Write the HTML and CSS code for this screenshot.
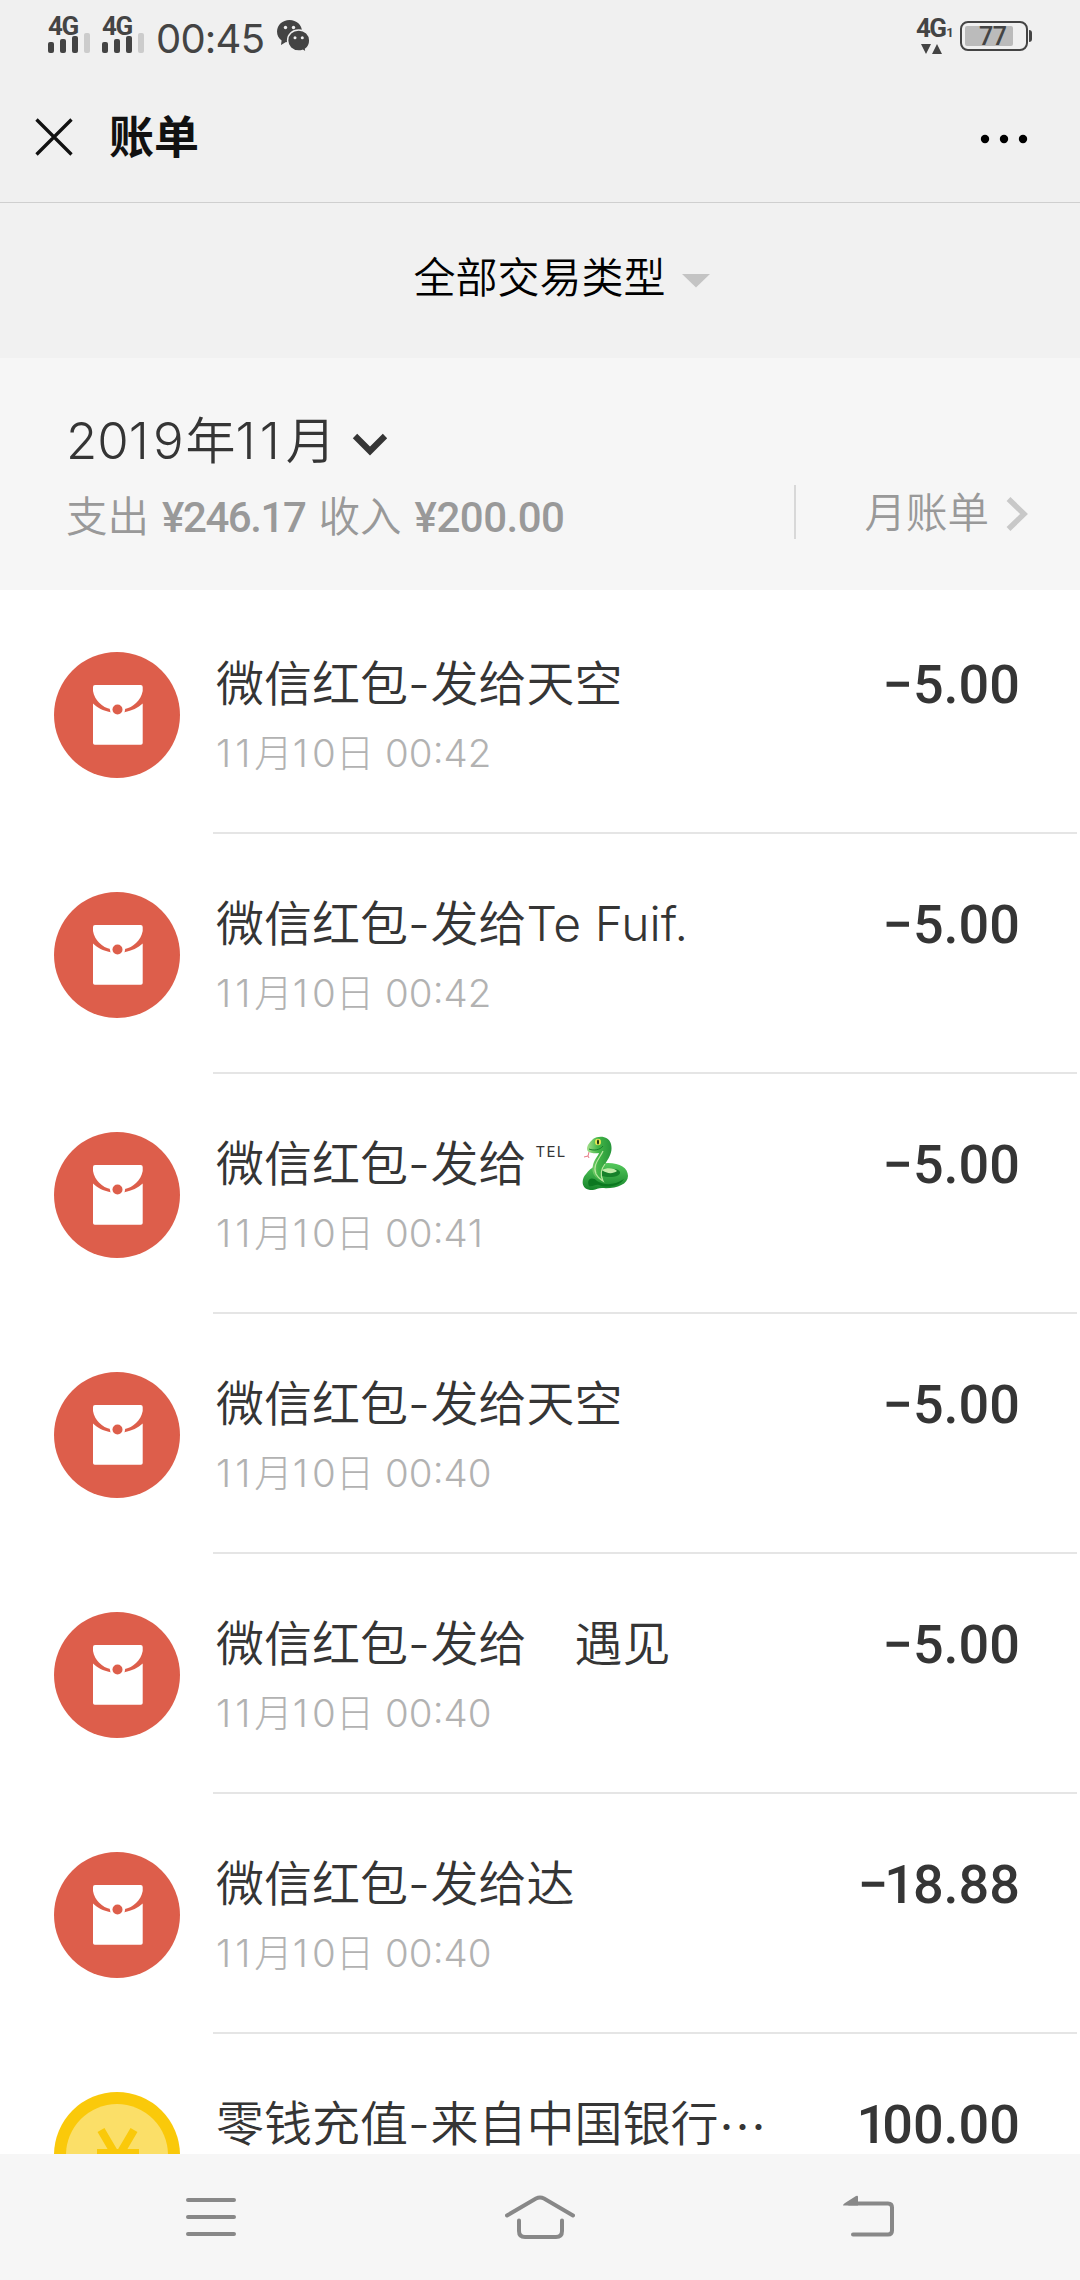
FILE: index.html
```html
<!DOCTYPE html>
<html lang="zh-CN">
<head>
<meta charset="utf-8">
<title>账单</title>
<link rel="stylesheet" href="styles.css">
</head>
<body>
<svg class="defs" width="0" height="0" aria-hidden="true">
  <symbol id="packet" viewBox="0 0 126 126">
    <circle cx="63" cy="63" r="63" fill="#dd5e4b"/>
    <path fill="#fff" d="M39 51.500C43.500 56 49 58.500 56.500 60.200H70.500C78 58.500 84 56 88.700 51.500V91a1.800 1.800 0 0 1-1.800 1.800H40.800A1.800 1.800 0 0 1 39 91Z"/>
    <path fill="#fff" d="M39 35A2 2 0 0 1 41 33H86.700A2 2 0 0 1 88.700 35V39C87 48 79.500 55.500 70 57.200H57C48 55.500 40.500 48 39 39Z"/>
    <circle cx="63.500" cy="57.500" r="7.600" fill="#fff"/>
    <circle cx="63.500" cy="57.500" r="5" fill="#dd5e4b"/>
  </symbol>
  <symbol id="signal" viewBox="0 0 42 20">
    <rect x="0" y="9" width="6" height="11" rx="2" fill="#444"/>
    <rect x="12" y="6" width="6" height="14" rx="2" fill="#444"/>
    <rect x="24" y="3" width="6" height="17" rx="2" fill="#444"/>
    <rect x="36" y="0" width="6" height="20" rx="2" fill="#ccc"/>
  </symbol>
</svg>

<header class="top">
  <div class="status">
    <div class="sim"><span>4G</span><svg width="42" height="20"><use href="#signal"/></svg></div>
    <div class="sim"><span>4G</span><svg width="42" height="20"><use href="#signal"/></svg></div>
    <div class="clock">00:45</div>
    <svg class="wechat" width="33" height="33" viewBox="0 0 33 33">
      <path fill="#444" d="M12.500 0C5.500 0 0 5 0 11.500c0 3.800 1.800 6.900 4.600 9L4 25l5-3c4 1 7 .5 10-1 4-2.200 6-5.500 6-9.500C25 5 19.500 0 12.500 0Z"/>
      <path fill="#444" stroke="#f0f0f0" stroke-width="1.500" d="M21.700 10C15.300 10 10.600 14.500 10.600 20.500S15.300 31 21.700 31c1.500 0 2.800-.2 4-.6l3.500 2-.6-3.300c2.600-1.900 4.200-5 4.200-8.600C32.800 14.500 28 10 21.700 10Z"/>
      <circle cx="8.500" cy="7.500" r="1.700" fill="#f0f0f0"/><circle cx="16.500" cy="7.500" r="1.700" fill="#f0f0f0"/>
      <circle cx="18" cy="17.800" r="1.500" fill="#f0f0f0"/><circle cx="25.300" cy="17.800" r="1.500" fill="#f0f0f0"/>
    </svg>
    <div class="net">
      <div class="net-label">4G<small>1</small></div>
      <svg width="22" height="10" viewBox="0 0 22 10"><path fill="#444" d="M0 0H10L5 10ZM11 10H21L16 0Z"/></svg>
    </div>
    <div class="battery"><span>77</span></div>
  </div>
  <div class="bar">
    <svg class="close" width="38" height="38" viewBox="0 0 38 38"><path d="M1.500 1.500 36.500 36.500M36.500 1.500 1.500 36.500" stroke="#111" stroke-width="3.300" fill="none"/></svg>
    <h1>账单</h1>
    <svg class="more" width="48" height="10" viewBox="0 0 48 10"><circle cx="5" cy="5" r="4.200"/><circle cx="24" cy="5" r="4.200"/><circle cx="43" cy="5" r="4.200"/></svg>
  </div>
</header>

<div class="filter"><span>全部交易类型</span><i class="caret"></i></div>

<section class="month">
  <div class="month-main">
    <div class="month-name"><span>20<i>1</i>9<b>年</b><i>11</i><b>月</b></span>
      <svg width="36" height="24" viewBox="0 0 36 24"><path d="M3 3 18 18 33 3" fill="none" stroke="#353535" stroke-width="6.200"/></svg>
    </div>
    <div class="summary">支出<span class="out">¥246.17</span>收入<span class="in">¥200.00</span></div>
  </div>
  <div class="month-link"><span>月账单</span>
    <svg width="22" height="34" viewBox="0 0 22 34"><path d="M2.500 2 18 17 2.500 32" fill="none" stroke="#c8c8c8" stroke-width="5.500"/></svg>
  </div>
</section>

<main class="list">
  <article class="row"><svg class="icon"><use href="#packet"/></svg><div class="body"><div class="text"><h2>微信红包<i>-</i>发给天空</h2><time><i>11</i>月<i>1</i>0日 00:42</time></div><div class="amount">−5.00</div></div></article>
  <article class="row"><svg class="icon"><use href="#packet"/></svg><div class="body"><div class="text"><h2>微信红包<i>-</i>发给Te Fuif.</h2><time><i>11</i>月<i>1</i>0日 00:42</time></div><div class="amount">−5.00</div></div></article>
  <article class="row"><svg class="icon"><use href="#packet"/></svg><div class="body"><div class="text"><h2>微信红包<i>-</i>发给<span class="tel">TEL</span><svg class="snake" width="48" height="54" viewBox="0 0 48 54">
    <defs>
      <linearGradient id="scale" x1="0" y1="0" x2="0" y2="1"><stop offset="0" stop-color="#55c95c"/><stop offset="1" stop-color="#16852b"/></linearGradient>
      <linearGradient id="neck" x1="0" y1="0" x2="1" y2="0"><stop offset="0" stop-color="#a5e08c"/><stop offset=".45" stop-color="#43b648"/><stop offset="1" stop-color="#27953a"/></linearGradient>
    </defs>
    <path d="M8 16 7 20 3 21M7 20l1 2" fill="none" stroke="#e77a86" stroke-width="1"/>
    <path d="M5 38C0 43 0 53 9 54c6 .5 7-2 12-2 13 1 26-3 26-12 0-8-8-13-20-13-9 0-17 4-22 11Z" fill="url(#scale)"/>
    <path d="M18 39c0-8 22-8 21-2-1 5-14 5-21 2Z" fill="#16812a"/>
    <path d="M21 34c5-3 13-2 15 1-4 3-10 3-15-1Z" fill="#c2ebaa"/>
    <path d="M8 50C5 43 11 40 16 45c6 4 17 5 27-2-5 8-18 9-25 6-4-1-6 2-10 1Z" fill="#0b7820"/>
    <path d="M12 3C18-1 28 0 30 8c2 8-2 14-6 20-4 5-5 11-2 17-8-2-12-8-10-16 1-5 5-9 6-12-5 1-12 0-12-4 0-4 3-7 6-10Z" fill="url(#neck)"/>
    <path d="M22 15C19 22 11 29 15 38c2 4 4 5 7 7-3-6-2-12 2-17" fill="none" stroke="#b9e6a0" stroke-width="1.200"/>
    <ellipse cx="17" cy="6" rx="3" ry="3.300" fill="#e6e651"/><ellipse cx="17" cy="6" rx="1" ry="2.600" fill="#142b12"/>
    <path d="M8 13c5 2 11 1 14-3" fill="none" stroke="#177f2b" stroke-width="1"/>
  </svg></h2><time><i>11</i>月<i>1</i>0日 00:4<i>1</i></time></div><div class="amount">−5.00</div></div></article>
  <article class="row"><svg class="icon"><use href="#packet"/></svg><div class="body"><div class="text"><h2>微信红包<i>-</i>发给天空</h2><time><i>11</i>月<i>1</i>0日 00:40</time></div><div class="amount">−5.00</div></div></article>
  <article class="row"><svg class="icon"><use href="#packet"/></svg><div class="body"><div class="text"><h2>微信红包<i>-</i>发给　遇见</h2><time><i>11</i>月<i>1</i>0日 00:40</time></div><div class="amount">−5.00</div></div></article>
  <article class="row"><svg class="icon"><use href="#packet"/></svg><div class="body"><div class="text"><h2>微信红包<i>-</i>发给达</h2><time><i>11</i>月<i>1</i>0日 00:40</time></div><div class="amount">−<i>1</i>8.88</div></div></article>
  <article class="row last"><svg class="icon" viewBox="0 0 126 126"><circle cx="63" cy="63" r="63" fill="#fac90a"/><circle cx="63" cy="63" r="51" fill="#fbdf68"/><path d="M47 38 63.500 66 80 38M43 61H85M43 75H85M63.500 62V92" fill="none" stroke="#fac90a" stroke-width="8"/></svg><div class="body"><div class="text"><h2>零钱充值<i>-</i>来自中国银行<b>…</b></h2></div><div class="amount"><i>1</i>00.00</div></div></article>
</main>

<nav class="nav">
  <svg width="50" height="44" viewBox="0 0 50 44"><path d="M2 5H48M2 22H48M2 39H48"/></svg>
  <svg width="70" height="46" viewBox="0 0 70 46"><path d="M2 20.500 31 3.500Q35 1.500 39 3.500L68 20.500M14 25.500V36Q14 42 20 42H51Q57 42 57 36V25.500"/></svg>
  <svg width="52" height="44" viewBox="0 0 52 44"><path d="M6 8.500H45Q49 8.500 49 12.500V35.500Q49 39.500 45 39.500H10"/><path class="head" d="M0 10.500Q0 9 2 8L13 1Q15 0 15 2V10.500Z"/></svg>
</nav>
</body>
</html>
```
FILE: styles.css
```css
* { box-sizing: border-box; margin: 0; padding: 0; }
body {
  width: 1080px; height: 2280px; overflow: hidden;
  display: flex; flex-direction: column;
  background: #fff; color: #353535;
  font-family: Inter, "Noto Sans CJK SC", sans-serif;
  font-weight: 350;
}
svg { display: block; flex: none; }
i { font-style: normal; }
.defs { position: absolute; }

.top { height: 203px; background: #f0f0f0; border-bottom: 1px solid #cfcfcf; flex: none; }
.status { height: 72px; display: flex; align-items: flex-start; padding: 0 48px; color: #444; }
.sim { width: 54px; padding-top: 16px; display: flex; flex-direction: column; }
.sim span { font: 700 26px/20px Roboto, sans-serif; height: 17px; letter-spacing: -1.500px; }
.clock { width: 120px; font-size: 40px; line-height: 41px; font-weight: 400; margin: 18px 0 0; letter-spacing: -.8px; }
.wechat { margin: 20px 0 0 1px; }
.net { margin: 18px 0 0 auto; width: 44px; }
.net-label { font: 700 26px/21px Roboto, sans-serif; letter-spacing: -1.700px; white-space: nowrap; }
.net-label small { font-size: 13px; margin-left: 1px; }
.net svg { margin: 1px 0 0 5px; }
.battery {
  position: relative; width: 68px; height: 30px; margin: 21px 4px 0 0;
  border: 2px solid #444; border-radius: 8px; padding: 3px;
}
.battery span { display: block; width: 48px; height: 20px; background: #bbb; font: 500 25px/21px Roboto, sans-serif; padding-left: 14px; border-radius: 2px; letter-spacing: -.5px; }
.battery::after { content: ""; position: absolute; right: -6px; top: 7px; width: 3px; height: 12px; background: #444; border-radius: 0 3px 3px 0; }
.bar { height: 130px; display: flex; align-items: center; padding: 3px 52px 0 35px; }
.close { margin-top: -3px; }
h1 { font-size: 45px; line-height: 60px; font-weight: 600; color: #111; margin: -2px 0 0 36px; }
.more { margin-left: auto; }

.filter { height: 155px; flex: none; background: #f1f1f1; display: flex; align-items: center; justify-content: center; gap: 16px; padding-left: 44px; color: #000; font-size: 42px; }
.filter span { margin-top: -12px; }
.caret { width: 29px; height: 14px; background: #c4c4c4; clip-path: polygon(0 0, 100% 0, 50% 100%); }

.month { height: 232px; flex: none; background: #f6f6f6; display: flex; justify-content: space-between; padding: 52px 52px 0 66px; }
.month-name { display: flex; align-items: center; gap: 16px; height: 62px; font-size: 51px; line-height: 62px; }
.month-name i { letter-spacing: 4px; }
.month-name b { font-weight: 350; font-size: 50px; margin-left: 2px; }
.month-name svg { margin-top: 8px; }
.summary { margin-top: 15px; display: flex; align-items: baseline; font-size: 41.500px; line-height: 60px; color: #999; white-space: nowrap; }
.summary span { font-family: Roboto, sans-serif; font-weight: 500; font-size: 42px; }
.summary .out { margin: 0 13px 0 13px; letter-spacing: -1.400px; }
.summary .in { margin-left: 13px; letter-spacing: -.5px; }
.month-link { align-self: flex-start; margin-top: 75px; height: 54px; border-left: 2px solid #d8d8d8; padding-left: 68px; display: flex; align-items: center; gap: 17px; font-size: 41.500px; color: #999; }
.month-link span { margin-top: -4px; }
.month-link svg { margin-top: 3px; }

.list { flex: 1; min-height: 0; overflow: hidden; padding-top: 4px; }
.row { height: 240px; display: flex; padding-left: 54px; }
.icon { width: 126px; height: 126px; margin-top: 58px; }
.body { flex: 1; margin: 0 3px 0 33px; border-bottom: 2px solid #e5e5e5; display: flex; justify-content: space-between; padding: 60px 57px 0 3px; }
.text { display: flex; flex-direction: column; gap: 9px; }
h2 { font-size: 48px; line-height: 60px; height: 60px; font-weight: 350; display: flex; white-space: pre; }
h2 i { letter-spacing: .8px; }
h2 b { font-family: "Noto Sans CJK SC", sans-serif; font-weight: 350; }
time { font-size: 38.500px; line-height: 60px; color: #b2b2b2; font-weight: 300; }
time i { letter-spacing: 4px; }
.tel { font-size: 15px; line-height: 36px; margin: 0 15px 0 9px; font-weight: 400; letter-spacing: 1.200px; }
.snake { margin-top: 2px; }
.amount { font: 500 54px/60px Roboto, sans-serif; padding-top: 1px; }
.amount i { margin: 0 -2px 0 -4px; }
.last .amount i { margin-right: -5px; }

.nav { height: 126px; flex: none; background: #f6f6f6; display: flex; justify-content: space-between; padding: 41px 185px 0 186px; }
.nav path { fill: none; stroke: #888; stroke-width: 4; stroke-linecap: round; }
.nav .head { fill: #888; stroke: none; }
```
